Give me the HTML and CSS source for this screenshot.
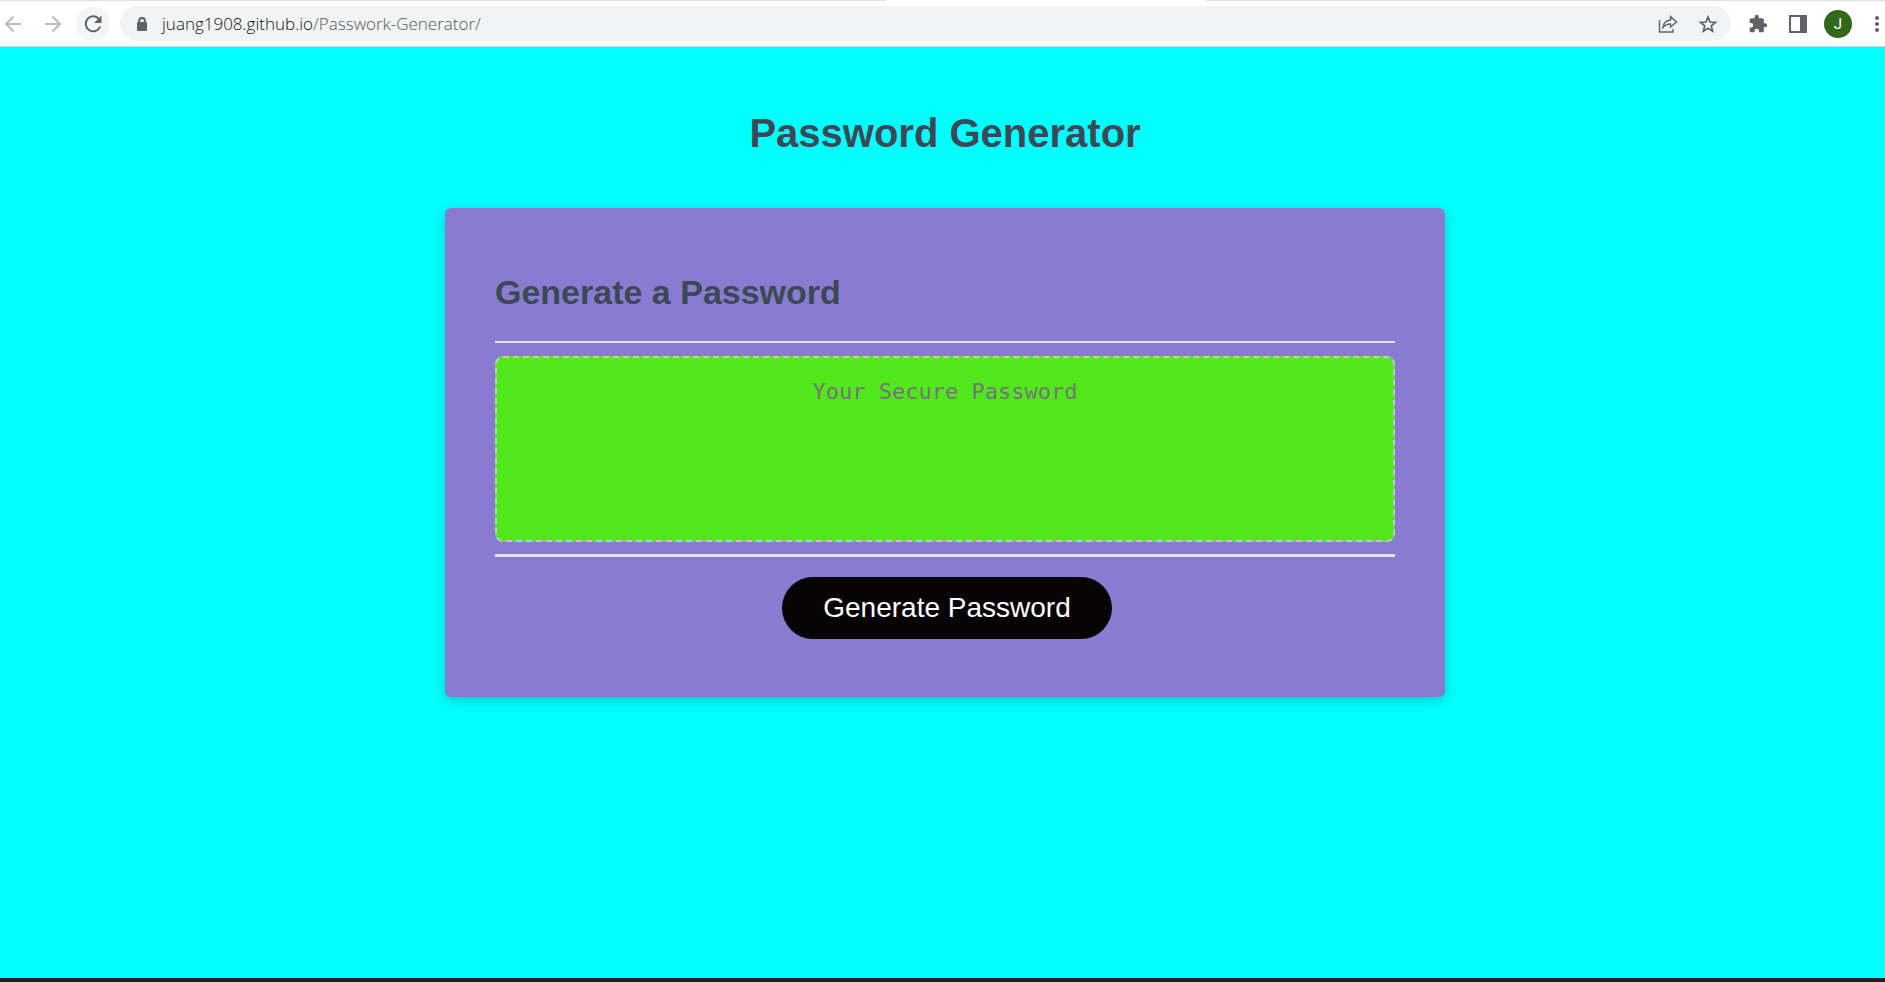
FILE: index.html
```
<!DOCTYPE html>
<html lang="en">
<head>
  <meta charset="UTF-8">
  <meta name="viewport" content="width=device-width, initial-scale=1">
  <title>Password Generator</title>
  <link rel="stylesheet" href="styles.css">
</head>
<body>
  <div class="browser">
    <div class="tab-edge"><span class="tab-left"></span><span class="tab-right"></span></div>
    <nav class="toolbar" aria-label="Browser toolbar">
      <div class="nav-buttons">
        <button class="icon-btn faded" type="button" aria-label="Back">
          <svg width="20" height="20" viewBox="0 0 20 20"><path d="M18 10H3M10.500 2.500 3 10l7.500 7.500"/></svg>
        </button>
        <button class="icon-btn faded" type="button" aria-label="Forward">
          <svg width="20" height="20" viewBox="0 0 20 20"><path d="M2 10h15M9.500 2.500 17 10l-7.500 7.500"/></svg>
        </button>
        <button class="icon-btn reload" type="button" aria-label="Reload">
          <svg width="20" height="20" viewBox="0 0 20 20"><path d="M15.500 4.500A7.500 7.500 0 1 0 17.200 12.500"/><path class="solid" d="M18.500 1.500V9H11z"/></svg>
        </button>
      </div>
      <div class="address">
        <svg class="lock" width="12" height="14" viewBox="0 0 12 14"><path d="M3.200 6V3.700a2.800 2.800 0 0 1 5.600 0V6"/><rect class="solid" x="1" y="5" width="10" height="9" rx="1"/></svg>
        <span class="url">juang1908.github.io<span class="path">/Passwork-Generator/</span></span>
        <button class="icon-btn" type="button" aria-label="Share">
          <svg class="thin" width="20" height="20" viewBox="0 0 20 20"><path d="M1.500 6v12H15v-3M5 13.500C5.500 9 8 6.500 12.500 6V2.500L18.500 8l-6 5V10C9 10 7 11 5 13.500z"/></svg>
        </button>
        <button class="icon-btn" type="button" aria-label="Bookmark this page">
          <svg class="star" width="20" height="20" viewBox="0 0 20 20"><path d="m10 3 2 5 5.500.4-4.200 3.500 1.300 5.300L10 14.300l-4.600 2.900 1.300-5.300L2.500 8.400 8 8z"/></svg>
        </button>
      </div>
      <div class="tools">
        <button class="icon-btn" type="button" aria-label="Extensions">
          <svg width="20" height="20" viewBox="0 0 24 24"><path class="fill" d="M20.500 11H19V7a2 2 0 0 0-2-2h-4V3.500a2.500 2.500 0 0 0-5 0V5H4a2 2 0 0 0-2 2v3.800h1.500a2.700 2.700 0 0 1 0 5.400H2V20a2 2 0 0 0 2 2h3.800v-1.500a2.700 2.700 0 0 1 5.400 0V22H17a2 2 0 0 0 2-2v-4h1.500a2.500 2.500 0 0 0 0-5z"/></svg>
        </button>
        <button class="icon-btn" type="button" aria-label="Side panel">
          <svg width="20" height="20" viewBox="0 0 20 20"><rect x="2" y="2" width="15" height="16"/><path class="fill" d="M12 1h7v18h-7z"/></svg>
        </button>
        <button class="avatar" type="button" aria-label="Profile">J</button>
        <button class="icon-btn" type="button" aria-label="Menu">
          <svg width="20" height="20" viewBox="0 0 20 20"><g class="fill"><circle cx="9" cy="4" r="2"/><circle cx="9" cy="10" r="2"/><circle cx="9" cy="16" r="2"/></g></svg>
        </button>
      </div>
    </nav>
  </div>
  <main class="wrapper">
    <header class="page-header"><h1>Password Generator</h1></header>
    <section class="card">
      <div class="card-header"><h2>Generate a Password</h2></div>
      <div class="card-body">
        <textarea class="password" readonly placeholder="Your Secure Password" aria-label="Generated Password"></textarea>
      </div>
      <div class="card-footer"><button class="btn" type="button">Generate Password</button></div>
    </section>
  </main>
  <div class="taskbar"></div>
</body>
</html>
```
FILE: styles.css
```
*,
*::before,
*::after {
  box-sizing: border-box;
}

body {
  margin: 0;
  min-height: 100vh;
  display: flex;
  flex-direction: column;
  overflow-x: hidden;
  background: #00ffff;
  color: #3b4956;
  font-family: Arial, "Liberation Sans", sans-serif;
}

button {
  border: 0;
  padding: 0;
  cursor: pointer;
  font-family: inherit;
}

/* Browser bar */
.browser {
  background: #ffffff;
  border-bottom: 1px solid #b4e4e4;
}

.tab-edge {
  display: flex;
  justify-content: space-between;
  height: 1px;
}

.tab-left {
  width: 47%;
  background: #dee1e6;
}

.tab-right {
  width: 36%;
  background: #dee1e6;
}

.toolbar {
  display: flex;
  align-items: center;
  height: 45px;
}

.nav-buttons {
  display: flex;
  gap: 6px;
  width: 120px;
  margin-left: -4px;
  margin-right: 4px;
}

.icon-btn {
  display: flex;
  flex: none;
  align-items: center;
  justify-content: center;
  width: 34px;
  height: 34px;
  border-radius: 50%;
  background: none;
  color: #5f6368;
}

.faded {
  color: #babcbe;
}

.reload {
  background: #f4f5f7;
}

svg {
  fill: none;
  stroke: currentColor;
  stroke-width: 2;
}

.thin {
  stroke-width: 1.4;
}

.star {
  stroke-width: 1.7;
}

.solid,
.fill {
  fill: currentColor;
  stroke: none;
}

.address {
  display: flex;
  flex: 1;
  align-items: center;
  gap: 6px;
  height: 35px;
  padding: 0 6px 0 16px;
  border-radius: 18px;
  background: #f1f3f4;
}

.lock {
  flex: none;
  margin-right: 8px;
  color: #5f6368;
}

.url {
  flex: 1;
  color: #101114;
  font-family: "Segoe UI", "Open Sans", sans-serif;
  font-size: 17px;
  font-weight: 300;
}

.path {
  color: #55585c;
}

.tools {
  display: flex;
  align-items: center;
  gap: 6px;
  margin-left: 10px;
  margin-right: -10px;
}

.avatar {
  width: 28px;
  height: 28px;
  margin: 0 3px;
  border-radius: 50%;
  background: #30691e;
  color: #ffffff;
  font-family: Roboto, sans-serif;
  font-size: 15px;
}

/* Page */
.wrapper {
  flex: 1;
  padding: 64px 0 48px 5px;
}

.page-header {
  margin-bottom: 52px;
  text-align: center;
}

h1,
h2 {
  margin: 0;
}

h1 {
  font-size: 40px;
  line-height: 45px;
}

h2 {
  font-size: 34px;
  line-height: 40px;
}

.card {
  max-width: 1000px;
  margin: 0 auto;
  padding: 64px 50px 58px;
  border-radius: 6px;
  background: #887bd0;
  box-shadow: 0 4px 12px rgba(0, 0, 0, 0.2);
}

.card-header {
  padding-bottom: 29px;
  border-bottom: 2px solid #e6dcf4;
}

.card-body {
  padding: 13px 0 12px;
}

.password {
  display: block;
  width: 100%;
  height: 186px;
  padding: 20px;
  border: 2px dashed #c8c4d4;
  border-radius: 8px;
  outline: none;
  resize: none;
  background: #50e81a;
  text-align: center;
  font-family: Consolas, "DejaVu Sans Mono", monospace;
  font-size: 22px;
  line-height: 28px;
}

.password::placeholder {
  color: #757575;
}

.card-footer {
  padding: 20px 0 0 4px;
  border-top: 3px solid #e6e0f6;
  text-align: center;
}

.btn {
  padding: 15px 41px;
  border-radius: 31px;
  background: #060405;
  color: #ffffff;
  font-size: 28px;
  line-height: 32px;
}

.taskbar {
  height: 4px;
  background: #1b2423;
}
```
